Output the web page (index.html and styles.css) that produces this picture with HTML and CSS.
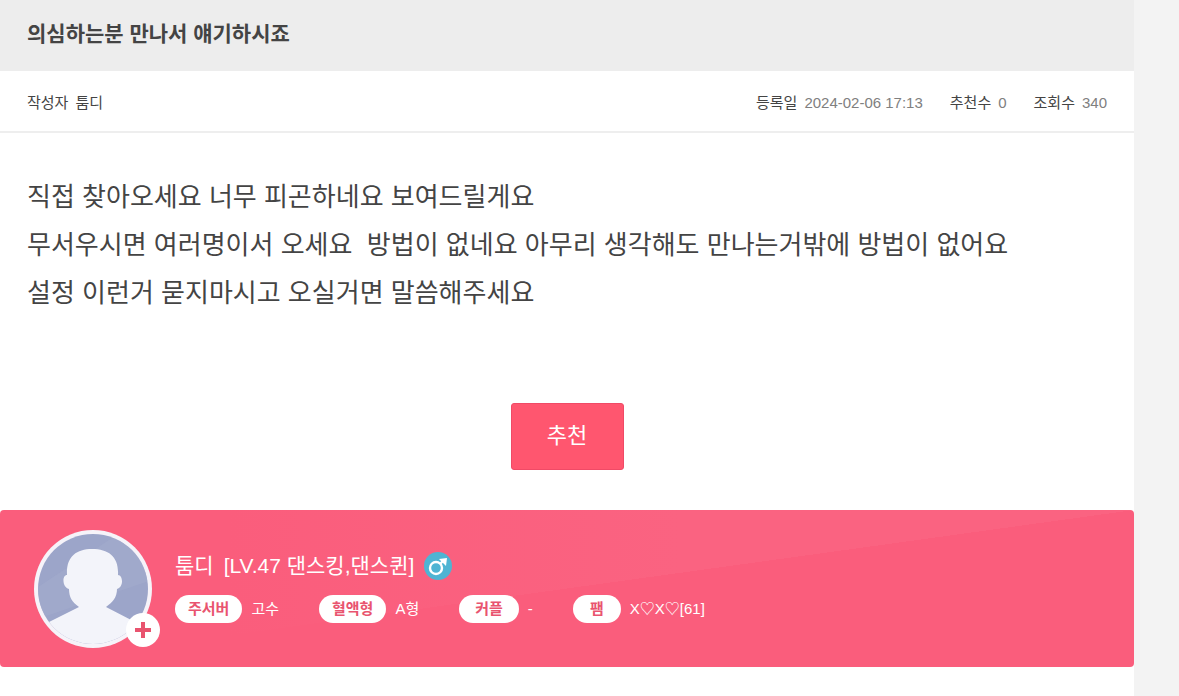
FILE: index.html
```html
<!DOCTYPE html>
<html lang="ko">
<head>
    <meta charset="UTF-8">
    <meta name="viewport" content="width=device-width, initial-scale=1.0">
    <title>의심하는분 만나서 얘기하시죠</title>
    <link rel="stylesheet" href="styles.css">
</head>
<body>
    <main class="board-view">
        <header class="view-title">
            <h1>의심하는분 만나서 얘기하시죠</h1>
        </header>

        <div class="view-info">
            <dl class="writer">
                <div><dt>작성자</dt><dd>툼디</dd></div>
            </dl>
            <dl class="counts">
                <div><dt>등록일</dt><dd>2024-02-06 17:13</dd></div>
                <div><dt>추천수</dt><dd>0</dd></div>
                <div><dt>조회수</dt><dd>340</dd></div>
            </dl>
        </div>

        <div class="view-content">
            <p>직접 찾아오세요 너무 피곤하네요 보여드릴게요</p>
            <p>무서우시면 여러명이서 오세요&nbsp; 방법이 없네요 아무리 생각해도 만나는거밖에 방법이 없어요</p>
            <p>설정 이런거 묻지마시고 오실거면 말씀해주세요</p>
        </div>

        <div class="recommend">
            <button type="button" class="btn-recommend">추천</button>
        </div>

        <section class="profile">
            <div class="avatar">
                <svg class="avatar-img" viewBox="0 0 118 118" aria-hidden="true">
                    <defs>
                        <clipPath id="face"><circle cx="59" cy="59" r="55"/></clipPath>
                    </defs>
                    <circle cx="59" cy="59" r="59" fill="#f6f3f9"/>
                    <g clip-path="url(#face)">
                        <rect width="118" height="118" fill="#9ca5c9"/>
                        <path d="M0 60L75 10L118 0V50L0 90Z" fill="#a3abcd" opacity=".6"/>
                        <path d="M33 45C32 27 42 19 58 19C75 19 85 27 84 45C89 45 90 57 83 59C83 67 79 72 72 77L103 93L118 118H0L15 92L45 77C38 72 35 67 35 59C28 57 28 45 33 45Z" fill="#f3f4fa"/>
                    </g>
                </svg>
                <button type="button" class="btn-add" aria-label="친구 추가">
                    <svg width="16" height="16" viewBox="0 0 16 16"><path d="M8 0V16M0 8H16" stroke="#e9546f" stroke-width="4"/></svg>
                </button>
            </div>
            <div class="profile-info">
                <div class="nickname">
                    <strong>툼디</strong>
                    <span>[LV.47 댄스킹,댄스퀸]</span>
                    <svg class="gender" viewBox="0 0 28 28" role="img" aria-label="남자">
                        <circle cx="14" cy="14" r="14" fill="#4fb4d3"/>
                        <circle cx="12" cy="16" r="6" fill="none" stroke="#fff" stroke-width="2.4"/>
                        <path d="M16 12L20 8" stroke="#fff" stroke-width="2.4"/>
                        <path d="M15 7L23 6L22 14Z" fill="#fff"/>
                    </svg>
                </div>
                <dl class="stats">
                    <div><dt>주서버</dt><dd>고수</dd></div>
                    <div><dt>혈액형</dt><dd>A형</dd></div>
                    <div><dt class="short">커플</dt><dd>-</dd></div>
                    <div><dt class="short">팸</dt><dd>X♡X♡[61]</dd></div>
                </dl>
            </div>
        </section>
    </main>
</body>
</html>
```
FILE: styles.css
```css
* {
    box-sizing: border-box;
}
html {
    background-color: #f3f3f3;
}
body {
    margin: 0;
    padding-right: 45px;
    font-family: 'Liberation Sans', 'Noto Sans CJK KR', 'DejaVu Sans', sans-serif;
    color: #444;
}
h1, p, dl, dd {
    margin: 0;
}
.board-view {
    min-height: 100vh;
    background-color: #fff;
}
.view-title {
    padding: 18px 27px 21px;
    background-color: #ededed;
}
.view-title h1 {
    font-size: 21px;
    line-height: 32px;
    font-weight: 700;
}
.view-info {
    display: flex;
    justify-content: space-between;
    padding: 21px 27px 17px;
    border-bottom: 2px solid #eee;
    font-size: 15px;
    line-height: 22px;
}
.counts {
    display: flex;
    gap: 27px;
}
.view-info dl div {
    display: flex;
    gap: 7px;
}
.counts dd {
    color: #808080;
}
.view-content {
    min-height: 270px;
    padding: 40px 27px 0;
    font-size: 26px;
    line-height: 48px;
}
.recommend {
    text-align: center;
}
.btn-recommend {
    width: 113px;
    height: 67px;
    padding: 0 0 8px;
    border: 1px solid #f04a66;
    border-radius: 3px;
    background-color: #ff566f;
    color: #fff;
    font-family: inherit;
    font-size: 22px;
    cursor: pointer;
}
.profile {
    display: flex;
    align-items: center;
    gap: 23px;
    margin-top: 40px;
    padding: 20px 34px 19px;
    border-radius: 4px;
    background:
        linear-gradient(to right, #fa5d7c 20%, transparent 60%),
        linear-gradient(to bottom right, rgba(255, 255, 255, 0.04) 50%, transparent 50%),
        #fa5d7c;
    color: #fff;
}
.avatar {
    position: relative;
    flex: none;
    height: 118px;
}
.avatar-img {
    width: 118px;
    height: 118px;
}
.btn-add {
    position: absolute;
    right: -8px;
    bottom: 1px;
    display: flex;
    align-items: center;
    justify-content: center;
    width: 34px;
    height: 34px;
    padding: 0;
    border: 0;
    border-radius: 50%;
    background-color: #fff;
    cursor: pointer;
}
.nickname {
    display: flex;
    align-items: center;
    gap: 10px;
    font-size: 21px;
    line-height: 30px;
}
.nickname strong {
    font-weight: 400;
}
.gender {
    width: 28px;
    height: 28px;
}
.stats {
    display: flex;
    gap: 40px;
    margin: 14px 0 4px;
    font-size: 15px;
    line-height: 28px;
}
.stats div {
    display: flex;
    gap: 9px;
}
.stats dt {
    min-width: 48px;
    padding: 0 13px;
    border-radius: 14px;
    background-color: #fff;
    color: #e9546f;
    font-weight: 700;
    text-align: center;
}
.stats .short {
    padding: 0 16px;
}
```
